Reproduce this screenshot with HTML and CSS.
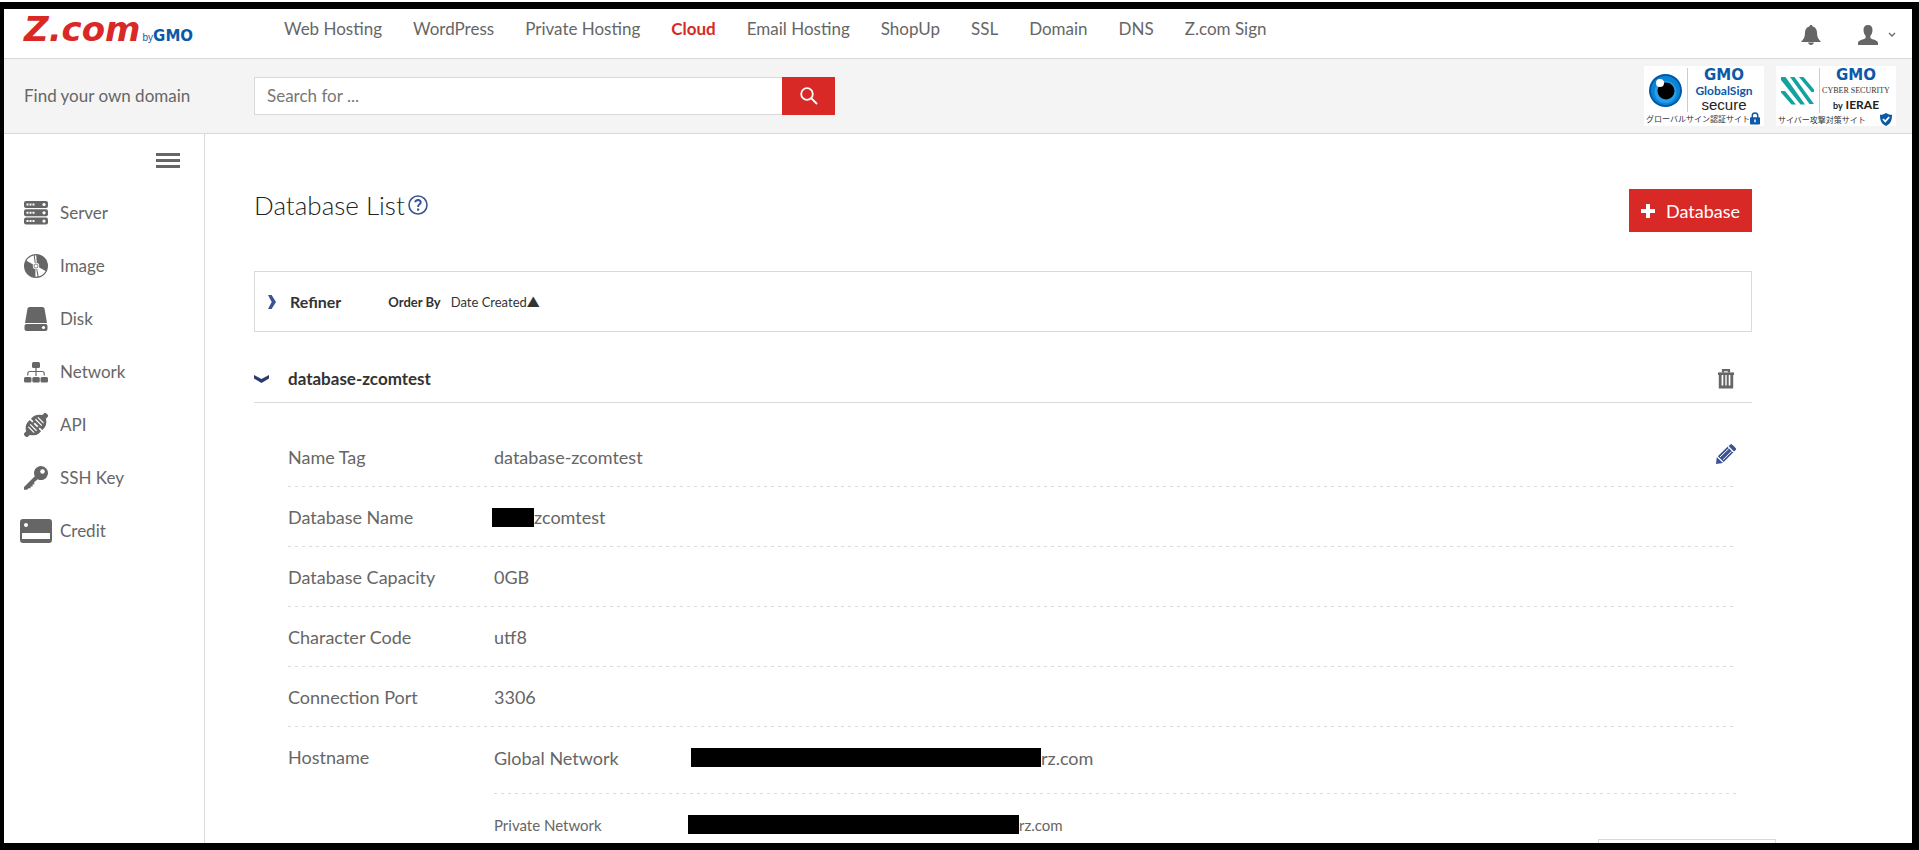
FILE: index.html
```html
<!DOCTYPE html>
<html lang="en">
<head>
<meta charset="utf-8">
<title>Database List - Z.com Cloud</title>
<link rel="stylesheet" href="styles.css">
</head>
<body>
<div class="frame">
  <header class="topbar">
    <a class="logo" href="#" aria-label="Z.com by GMO"><span class="logo-z">Z.com</span><span class="logo-by">by</span><span class="logo-gmo">GMO</span></a>
    <nav class="nav">
      <a href="#">Web Hosting</a>
      <a href="#">WordPress</a>
      <a href="#">Private Hosting</a>
      <a class="active" href="#">Cloud</a>
      <a href="#">Email Hosting</a>
      <a href="#">ShopUp</a>
      <a href="#">SSL</a>
      <a href="#">Domain</a>
      <a href="#">DNS</a>
      <a href="#">Z.com Sign</a>
    </nav>
    <div class="account">
      <button class="icon-btn" aria-label="Notifications">
        <svg width="20" height="20" viewBox="0 0 20 20" fill="#666"><path d="M10 0c1 0 1.600.7 1.600 1.500C14.500 2.200 16 4.500 16 7.500c0 4 1 6.500 4 9.500H0c3-3 4-5.500 4-9.500 0-3 1.500-5.300 4.400-6C8.400.7 9 0 10 0zM7 17.600h6c-.4 1.500-1.500 2.400-3 2.400s-2.600-.9-3-2.400z"/></svg>
      </button>
      <button class="icon-btn user" aria-label="Account">
        <svg width="20" height="20" viewBox="0 0 20 20" fill="#666"><path d="M10 0c3.200 0 4.600 2 4.500 5-.1 2.600-.9 4.600-2.100 5.800v2.100c1 1.400 7.600 1.900 7.600 5V20H0v-2.100c0-3.100 6.600-3.600 7.600-5v-2.100C6.400 9.600 5.600 7.600 5.500 5 5.400 2 6.800 0 10 0z"/></svg>
        <svg width="8" height="6" viewBox="0 0 8 6" fill="none" stroke="#666" stroke-width="1.300"><path d="M1 1l3 3 3-3"/></svg>
      </button>
    </div>
  </header>

  <section class="searchbar">
    <label class="search-label" for="domain">Find your own domain</label>
    <form class="search">
      <input id="domain" type="text" placeholder="Search for ...">
      <button type="button" aria-label="Search">
        <svg width="18" height="18" viewBox="0 0 18 18" fill="none" stroke="#fff" stroke-width="1.800"><circle cx="7" cy="7" r="5.800"/><path d="M11.200 11.200L17 17"/></svg>
      </button>
    </form>
    <div class="badges">
      <a class="badge" href="#">
        <span class="badge-top">
          <svg class="badge-mark" width="33" height="33" viewBox="0 0 33 33"><circle cx="16.500" cy="16.500" r="16.500" fill="#0058a8"/><circle cx="16.500" cy="16.500" r="14.500" fill="#0a85d6"/><circle cx="16.500" cy="18" r="11" fill="#26a0ea"/><circle cx="17" cy="17" r="8.500" fill="#000"/><circle cx="11" cy="9" r="4" fill="#fff"/></svg>
          <span class="badge-text"><b class="gmo">GMO</b><b class="gs">GlobalSign</b><span class="secure">secure</span></span>
        </span>
        <span class="badge-foot" lang="ja">グローバルサイン認証サイト
          <svg width="10" height="13" viewBox="0 0 11 13"><path d="M2.500 6V3.500a3 3 0 0 1 6 0V6" fill="none" stroke="#0b59a8" stroke-width="1.600"/><rect y="5" width="11" height="8" rx="1" fill="#0b59a8"/><path d="M5.500 7.500v3" stroke="#fff" stroke-width="1.600"/></svg>
        </span>
      </a>
      <a class="badge" href="#">
        <span class="badge-top">
          <svg class="badge-mark" width="33" height="28" viewBox="0 0 33 28" fill="#12a3a0"><path d="M0 14h4l11 13.500h-4.500L0 15.500zM0 0h4.500L24 27.500h-4.500L0 3zM9 0h4.500L33 27h-4.500zM18 0h4.500L33 12.500V15h-2.500z"/></svg>
          <span class="badge-text"><b class="gmo">GMO</b><span class="cyber">CYBER SECURITY</span><b class="ierae"><small>by</small> IERAE</b></span>
        </span>
        <span class="badge-foot" lang="ja">サイバー攻撃対策サイト
          <svg width="12" height="13" viewBox="0 0 12 13"><path d="M6 0c2 1.300 4 1.800 6 1.800 0 5.200-1 9-6 11.200C1 10.800 0 7 0 1.800 2 1.800 4 1.300 6 0z" fill="#0b59a8"/><path d="M3 6l2.300 2.400L9.200 4" fill="none" stroke="#fff" stroke-width="1.800"/></svg>
        </span>
      </a>
    </div>
  </section>

  <div class="body">
    <aside class="sidebar">
      <button class="menu-btn" aria-label="Toggle menu"><i></i><i></i><i></i></button>
      <nav class="side-nav">
        <a href="#"><svg width="24" height="24" viewBox="0 0 24 24"><g fill="#666"><rect width="24" height="7" rx="2"/><rect y="8.300" width="24" height="7" rx="2"/><rect y="16.600" width="24" height="7" rx="2"/></g><g fill="#fff"><path d="M2.500 2.500h2v2h-2zm3 0h2v2h-2zm3 0h2v2h-2zM2.500 10.800h2v2h-2zm3 0h2v2h-2zm3 0h2v2h-2zM2.500 19.100h2v2h-2zm3 0h2v2h-2zm3 0h2v2h-2z"/><circle cx="20" cy="3.500" r="1.600"/><circle cx="20" cy="11.800" r="1.600"/><circle cx="20" cy="20.100" r="1.600"/></g></svg>Server</a>
        <a href="#"><svg width="24" height="24" viewBox="0 0 24 24"><circle cx="12" cy="12" r="12" fill="#666"/><g fill="#fff"><path d="M10.800 9.200L9.700 1.600C6.600 2.300 4 4.200 2.500 6.700l6.600 3.800zM11.700 8.800l-.9-7.400 1.400-.1.600 7.400zM14.900 13.300l6.700 3.600c-1.500 2.700-4 4.700-7 5.400l-1.400-7.400zM11.400 15.200h.9l1.200 7.400-2.100.1z"/><circle cx="12" cy="12" r="3.200"/></g><circle cx="12" cy="12" r="2" fill="#fff" stroke="#666" stroke-width=".8"/></svg>Image</a>
        <a href="#"><svg width="24" height="24" viewBox="0 0 24 24"><g fill="#666"><path d="M5.500 0h13q1.500 0 2 1.500L23 16H1L3.500 1.500Q4 0 5.500 0z"/><rect x=".5" y="17" width="23" height="7" rx="2"/></g><circle cx="19.500" cy="20.500" r="1.600" fill="#fff"/></svg>Disk</a>
        <a href="#"><svg width="24" height="24" viewBox="0 0 24 24" fill="#666"><rect x="8" y="2" width="8" height="6" rx="1.500"/><rect y="17" width="7.500" height="5.500" rx="1.500"/><rect x="8.300" y="17" width="7.500" height="5.500" rx="1.500"/><rect x="16.500" y="17" width="7.500" height="5.500" rx="1.500"/><path d="M12 8v8M3.800 15.500v-2q0-2 2-2h12.400q2 0 2 2v2" fill="none" stroke="#666" stroke-width="1.200"/></svg>Network</a>
        <a href="#"><svg width="24" height="24" viewBox="0 0 24 24"><g transform="rotate(-45 12 12)"><path d="M-3.500 9.500h4Q3.500 4.500 8 4h3.200v16H8Q3.500 19.500.5 14.500h-4zM27.500 9.500h-4Q20.500 4.500 16 4h-3.200v16H16q4.500-.5 7.500-5.500h4z" fill="#666"/><path d="M5.300 8v8M8.300 7.500v9M15.700 7.500v9M18.700 8v8" stroke="#fff" stroke-width="1.200"/><path d="M10.800 8.500h2.400M10.800 15.500h2.400" stroke="#666" stroke-width="2"/></g></svg>API</a>
        <a href="#"><svg width="24" height="24" viewBox="0 0 24 24"><path d="M17 0a7 7 0 1 1-3.300 13.200L10 16.500l.5 1.700-2 .3.200 1.900-2.100.2v1.600l-2 .1L3 23.800H0V21L10.800 10.200A7 7 0 0 1 17 0z" fill="#666"/><circle cx="18.500" cy="5.500" r="2.300" fill="#fff"/></svg>SSH Key</a>
        <a class="wide" href="#"><svg width="32" height="24" viewBox="0 0 32 24"><rect width="32" height="24" rx="3" fill="#666"/><path d="M2 14h28v6H2z" fill="#fff"/><circle cx="6" cy="6" r="2" fill="#fff"/></svg>Credit</a>
      </nav>
    </aside>

    <main class="main">
      <div class="title-row">
        <h1>Database List
          <svg width="20" height="20" viewBox="0 0 20 20"><circle cx="10" cy="10" r="9" fill="none" stroke="#3b5394" stroke-width="1.600"/><path d="M7.200 7.200Q7.700 5 10 5q2.700.1 2.700 2.300 0 1.300-1.500 2.200Q10.100 10.200 10.100 12" fill="none" stroke="#3b5394" stroke-width="2"/><path d="M9 13.500h2.200v2.200H9z" fill="#3b5394"/></svg>
        </h1>
        <button class="add-btn"><svg width="14" height="14" viewBox="0 0 14 14" fill="#fff"><path d="M5 0h4v5h5v4H9v5H5V9H0V5h5z"/></svg>Database</button>
      </div>

      <section class="refiner">
        <button class="toggle"><svg width="8" height="14" viewBox="0 0 8 14" fill="#3b5394"><path d="M0 0h3.600L8 7l-4.400 7H0l3.700-7z"/></svg>Refiner</button>
        <span class="order"><b>Order By</b><a href="#">Date Created▲</a></span>
      </section>

      <section class="record">
        <div class="record-head">
          <button class="toggle"><svg width="15" height="8" viewBox="0 0 15 8" fill="#2b3a70"><path d="M0 0l7.500 4L15 0v3.500L7.500 8 0 3.500z"/></svg>database-zcomtest</button>
          <button class="icon-btn" aria-label="Delete"><svg width="16" height="20" viewBox="0 0 16 20" fill="none" stroke="#666"><path d="M5 3.500V1.200h6v2.300" stroke-width="2.200"/><path d="M0 4.700h16" stroke-width="2.600"/><path d="M2.200 5v13h11.600V5" stroke-width="2.800"/><path d="M6.300 5v13M9.700 5v13" stroke-width="2"/></svg></button>
        </div>
        <dl class="fields">
          <div class="field"><dt>Name Tag</dt><dd>database-zcomtest</dd>
            <button class="icon-btn edit" aria-label="Edit name tag"><svg width="20" height="20" viewBox="0 0 20 20" fill="#3b5394"><path d="M15 0q1 0 5 4.600v1.200L18 7.500 12.600 2zM0 20l.8-7L7 19z"/><path d="M1.800 12.200L11.800 2.600l5.600 5.600L7.700 18z"/><path d="M4 13l8.800-8.500M7 15.800l8.600-8.500M11.800 2.600l5.600 5.600M1.500 12.700l5.500 5.500" stroke="#fff" stroke-width="1"/></svg></button></div>
          <div class="field"><dt>Database Name</dt><dd class="masked"><span class="mask mask-short"></span>zcomtest</dd></div>
          <div class="field"><dt>Database Capacity</dt><dd>0GB</dd></div>
          <div class="field"><dt>Character Code</dt><dd>utf8</dd></div>
          <div class="field"><dt>Connection Port</dt><dd>3306</dd></div>
          <div class="field hosts"><dt>Hostname</dt>
            <dd>
              <div class="host"><span class="host-kind">Global Network</span><span class="mask mask-global"></span>rz.com</div>
              <div class="host small"><span class="host-kind">Private Network</span><span class="mask mask-private"></span>rz.com</div>
            </dd></div>
        </dl>
      </section>
    </main>
  </div>
  <div class="dock"></div>
</div>
</body>
</html>
```
FILE: styles.css
```css
* { box-sizing: border-box; }

body {
  margin: 0;
  padding-top: 2px;
  height: 100vh;
  overflow: hidden;
  background: #fff;
  color: #666;
  font: 17px/24px "Century Gothic", Lato, "Noto Sans CJK JP", sans-serif;
}

a { color: inherit; text-decoration: none; }
button { border: 0; padding: 0; background: none; color: inherit; font: inherit; cursor: pointer; }
svg { display: block; flex: none; }

.frame {
  position: relative;
  height: 100%;
  border: 7px solid #000;
  border-left-width: 4px;
  overflow: hidden;
}

/* Top bar */
.topbar { display: flex; align-items: flex-start; height: 50px; border-bottom: 1px solid #d9d9d9; padding: 8px 16px 0 20px; }
.logo { display: flex; align-items: baseline; width: 260px; height: 24px; color: #0b59a8; line-height: 24px; }
.logo-z { font: italic bold 34px/24px "DejaVu Sans", sans-serif; color: #d92926; }
.logo-by { font: 10px/16px "Liberation Sans", sans-serif; margin-left: 2px; }
.logo-gmo { font: bold 15px/16px "DejaVu Sans", sans-serif; }
.nav { display: flex; gap: 31px; flex: 1; }
.nav .active { color: #d92926; font-weight: bold; }
.account { display: flex; gap: 37px; padding-top: 8px; }
.icon-btn { display: flex; align-items: center; }
.user { gap: 10px; }

/* Domain search */
.searchbar { display: flex; align-items: center; height: 75px; padding: 0 16px 0 20px; background: #f4f4f4; border-bottom: 1px solid #d9d9d9; }
.search-label { width: 230px; }
.search { display: flex; height: 38px; width: 581px; }
.search input { flex: 1; min-width: 0; border: 1px solid #d9d9d9; border-right: 0; padding: 0 12px; background: #fff; color: #666; font: inherit; }
.search input::placeholder { color: #777; opacity: 1; }
.search button { display: grid; place-items: center; width: 53px; background: #d92926; }
.badges { display: flex; gap: 12px; margin-left: auto; }
.badge { display: flex; flex-direction: column; justify-content: space-between; width: 120px; height: 60px; padding: 2px 4px 1px 5px; background: #fff; color: #333; }
.badge-top { display: flex; align-items: center; justify-content: space-between; }
.badge-text { display: flex; flex-direction: column; align-items: center; width: 73px; border-left: 1px solid #ccc; white-space: nowrap; }
.gmo { font: bold 15px/15px "DejaVu Sans", sans-serif; color: #0b59a8; }
.gs { font: bold 12px/15px Lato, sans-serif; color: #0b59a8; }
.secure { font: 15px/14px "Liberation Sans", sans-serif; color: #222; }
.cyber { font: 8px/15px "Liberation Serif", serif; }
.ierae { font: bold 12px/14px Lato, sans-serif; color: #222; }
.ierae small { font-size: 9px; }
.badge-foot { display: flex; align-items: center; justify-content: space-between; margin-left: -3px; font: 8px/13px "Noto Sans CJK JP", sans-serif; white-space: nowrap; }

/* Columns */
.body { display: flex; min-height: 100%; }
.sidebar { width: 201px; flex: none; border-right: 1px solid #d9d9d9; padding: 19px 24px 0 20px; }
.menu-btn { display: flex; flex-direction: column; gap: 3px; width: 24px; margin-left: auto; }
.menu-btn i { height: 3px; background: #666; }
.side-nav { display: flex; flex-direction: column; margin-top: 18px; }
.side-nav a { display: flex; align-items: center; gap: 12px; height: 53px; }
.side-nav .wide { margin-left: -4px; gap: 8px; }

.main { flex: 1; padding: 55px 160px 0 49px; font-size: 18px; }
.title-row { display: flex; justify-content: space-between; align-items: flex-start; height: 82px; }
h1 { display: flex; align-items: center; gap: 3px; margin: 0; color: #222; font-size: 26px; line-height: 32px; font-weight: 300; }
.add-btn { display: flex; align-items: center; justify-content: center; gap: 11px; width: 123px; height: 43px; background: #d92926; color: #fff; }

.refiner { display: flex; align-items: center; height: 61px; padding: 0 13px; border: 1px solid #d9d9d9; color: #333; }
.toggle { display: flex; align-items: center; gap: 14px; font-size: 17px; font-weight: bold; color: #333; }
.refiner .toggle { font-size: 16px; }
.order { display: flex; gap: 10px; margin-left: 47px; font-size: 13px; }

.record-head { display: flex; align-items: center; justify-content: space-between; height: 71px; padding: 24px 18px 0 0; border-bottom: 1px solid #d9d9d9; }
.record-head .toggle { gap: 19px; }
.fields { margin: 0; padding: 24px 16px 0 34px; }
.field,
.host {
  display: flex;
  align-items: center;
  background: repeating-linear-gradient(90deg, #d9d9d9 0 3px, transparent 3px 7px) left bottom / 100% 1px no-repeat;
}
.field { height: 60px; }
.field dt { width: 206px; flex: none; }
.field dd { margin: 0; flex: 1; }
.edit { align-self: flex-start; padding-top: 17px; }
.mask { background: #000; height: 19px; flex: none; }
.masked { display: flex; align-items: center; }
.mask-short { width: 42px; margin-left: -2px; }
.hosts { height: auto; align-items: flex-start; background: none; }
.hosts dt { padding-top: 18px; }
.host { height: 67px; padding-bottom: 6px; }
.host.small { font-size: 15px; background: none; }
.host-kind { width: 197px; }
.mask-global { width: 350px; }
.mask-private { width: 331px; margin-left: -3px; }

/* Panel docked at the lower edge of the window */
.dock { position: absolute; right: 136px; bottom: 0; width: 178px; height: 4px; border: 1px solid #d9d9d9; border-bottom: 0; background: #fff; }
```
